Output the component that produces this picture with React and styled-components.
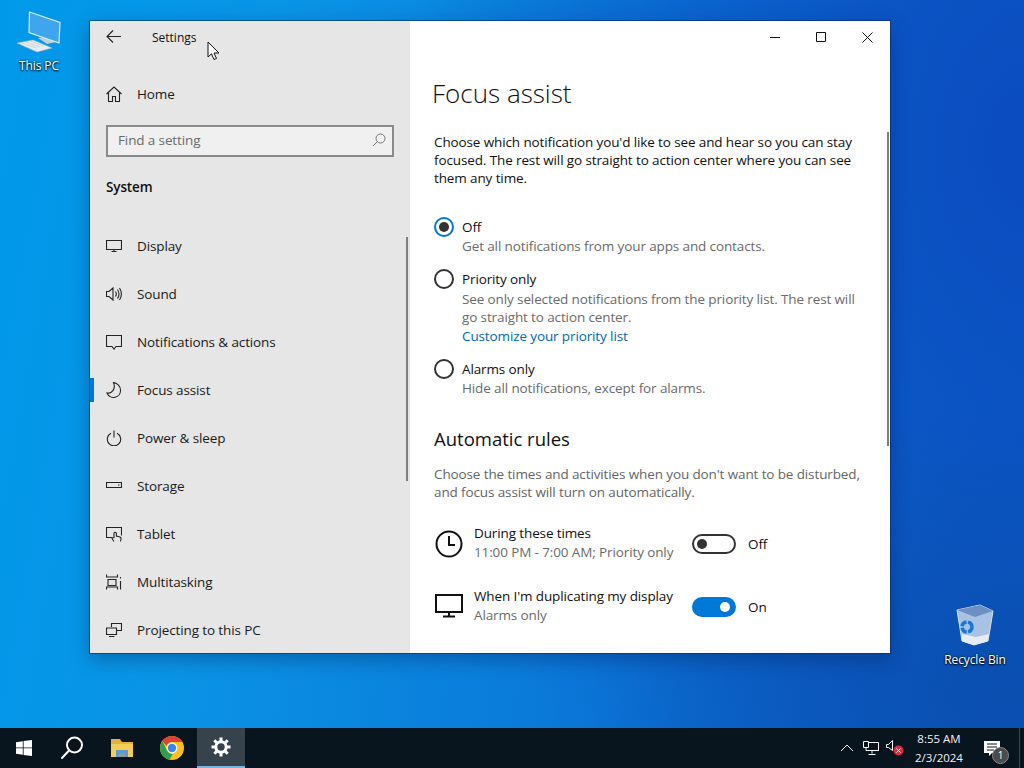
import styled, { createGlobalStyle } from 'styled-components';

const GlobalStyle = createGlobalStyle`
  html, body {
    margin: 0;
    padding: 0;
    overflow: hidden;
  }
  body {
    font-family: "Open Sans", "Noto Sans", "Liberation Sans", sans-serif;
    font-size: 13.5px;
    letter-spacing: -0.12px;
    color: #111;
  }
  * {
    box-sizing: border-box;
  }
`;

const Page = styled.div`
  width: 1024px;
  height: 768px;
  display: grid;
  grid-template-rows: 728px 40px;
`;

const Desktop = styled.div`
  position: relative;
  overflow: hidden;
  background:
    radial-gradient(ellipse 420px 300px at 1010px 700px, #0a4fb0 0%, rgba(10, 79, 176, 0) 100%),
    radial-gradient(ellipse 620px 900px at 100% 20%, #0b4cc0 0%, rgba(11, 76, 192, 0) 100%),
    linear-gradient(100deg, #0099ea 0%, #0a94e6 25%, #0a78d8 60%, #0a5fc8 100%);
`;

const DesktopIcon = styled.div`
  position: absolute;
  left: ${(p) => p.$left}px;
  top: ${(p) => p.$top}px;
  width: 76px;
  display: flex;
  flex-direction: column;
  align-items: center;
  color: #fff;
  font-size: 12px;
  line-height: 16px;
  text-shadow: 0 1px 2px #000, 0 0 2px #000;
  svg {
    margin-bottom: ${(p) => p.$labelGap}px;
  }
`;

const Window = styled.div`
  position: absolute;
  left: 90px;
  top: 21px;
  width: 800px;
  height: 632px;
  display: grid;
  grid-template-columns: 320px 480px;
  box-shadow: 0 0 0 1px rgba(5, 40, 90, 0.55), 0 6px 18px rgba(0, 20, 70, 0.35);
  overflow: hidden;
`;

const Sidebar = styled.aside`
  position: relative;
  background: #e6e6e6;
  overflow: hidden;
`;

const TitleRow = styled.div`
  height: 32px;
  display: flex;
  align-items: center;
  padding-left: 16px;
  font-size: 12px;
  letter-spacing: 0;
  svg {
    display: block;
  }
`;

const TitleText = styled.span`
  margin-left: 30px;
  margin-top: 1px;
`;

const NavRow = styled.div`
  position: relative;
  height: 48px;
  display: flex;
  align-items: center;
  padding-left: 16px;
  gap: 15px;
  color: #1a1a1a;
  svg {
    flex: none;
    display: block;
  }
`;

const HomeRow = styled(NavRow)`
  margin-top: 17px;
`;

const SelectedMark = styled.span`
  position: absolute;
  left: 0;
  top: 12px;
  width: 4px;
  height: 24px;
  background: #0078d7;
`;

const SearchBox = styled.div`
  margin: 7px 0 0 16px;
  width: 288px;
  height: 32px;
  border: 2px solid #8a8a8a;
  background: #f0f0f0;
  display: flex;
  align-items: center;
  justify-content: space-between;
  padding: 0 6px 2px 10px;
  color: #6b6b6b;
`;

const GroupTitle = styled.div`
  margin: 20px 0 0 16px;
  font-weight: 600;
  line-height: 20px;
`;

const NavList = styled.nav`
  margin-top: 25px;
`;

const ScrollThumb = styled.div`
  position: absolute;
  top: ${(p) => p.$top}px;
  right: ${(p) => p.$right}px;
  width: 2px;
  height: ${(p) => p.$height}px;
  background: #7f7f7f;
`;

const Content = styled.main`
  position: relative;
  background: #fff;
  overflow: hidden;
  padding-left: 24px;
`;

const WindowControls = styled.div`
  height: 32px;
  margin-left: -24px;
  display: flex;
  justify-content: flex-end;
`;

const ControlButton = styled.div`
  width: 46px;
  height: 32px;
  display: flex;
  align-items: center;
  justify-content: center;
`;

const PageTitle = styled.h1`
  margin: 20px 0 0 -2px;
  font-size: 26px;
  font-weight: 300;
  letter-spacing: 0;
  line-height: 40px;
  color: #111;
`;

const Paragraph = styled.p`
  margin: ${(p) => p.$top}px 0 0;
  width: 436px;
  line-height: 18px;
  color: ${(p) => p.$muted ? '#666' : '#111'};
`;

const RadioGroup = styled.div`
  margin-top: 30px;
  display: flex;
  flex-direction: column;
  gap: 14px;
`;

const RadioOption = styled.div`
  display: grid;
  grid-template-columns: 28px 1fr;
  line-height: 18px;
`;

const RadioCircle = styled.span`
  width: 20px;
  height: 20px;
  border-radius: 50%;
  border: 2px solid ${(p) => p.$checked ? '#0078d7' : '#333'};
  display: flex;
  align-items: center;
  justify-content: center;
  &::after {
    content: '';
    display: ${(p) => p.$checked ? 'block' : 'none'};
    width: 10px;
    height: 10px;
    border-radius: 50%;
    background: #333;
  }
`;

const RadioLabel = styled.div`
  line-height: 20px;
`;

const Muted = styled.div`
  color: #6b6b6b;
  line-height: 18px;
  width: 410px;
`;

const PriorityDetails = styled.div`
  padding-top: 1px;
`;

const PriorityLink = styled.div`
  color: #0067b8;
  margin-top: 1px;
  line-height: 18px;
`;

const SectionTitle = styled.h2`
  margin: 28px 0 0;
  font-size: 18.5px;
  font-weight: 400;
  letter-spacing: 0;
  line-height: 28px;
`;

const Rules = styled.div`
  margin-top: 22px;
  display: flex;
  flex-direction: column;
  gap: 25px;
`;

const Rule = styled.div`
  display: grid;
  grid-template-columns: 40px 218px 44px auto;
  align-items: center;
  height: 38px;
`;

const RuleIcon = styled.svg`
  margin-top: ${(p) => p.$shift}px;
`;

const RuleTitle = styled.div`
  line-height: 20px;
  white-space: nowrap;
`;

const Toggle = styled.span`
  position: relative;
  width: 44px;
  height: 20px;
  margin-top: 3px;
  border-radius: 10px;
  border: 2px solid ${(p) => p.$on ? '#0078d7' : '#333'};
  background: ${(p) => p.$on ? '#0078d7' : '#fff'};
  &::after {
    content: '';
    position: absolute;
    top: 3px;
    left: ${(p) => p.$on ? '26px' : '3px'};
    width: 10px;
    height: 10px;
    border-radius: 50%;
    background: ${(p) => p.$on ? '#fff' : '#333'};
  }
`;

const ToggleLabel = styled.span`
  margin: 4px 0 0 12px;
`;

const Cursor = styled.svg`
  position: absolute;
  left: 207px;
  top: 41px;
`;

const Taskbar = styled.footer`
  height: 40px;
  background: #08151f;
  display: flex;
  align-items: stretch;
  color: #fff;
`;

const TaskButton = styled.div`
  width: ${(p) => p.$width || 48}px;
  display: flex;
  align-items: center;
  justify-content: center;
  background: ${(p) => p.$active ? '#36434c' : 'transparent'};
  border-bottom: ${(p) => p.$active ? '2px solid #7cb4dc' : 'none'};
  margin-left: ${(p) => p.$gap || 0}px;
`;

const Tray = styled.div`
  margin-left: auto;
  display: flex;
  align-items: center;
`;

const TrayIcon = styled.div`
  width: 24px;
  display: flex;
  justify-content: center;
`;

const Clock = styled.div`
  width: 64px;
  text-align: center;
  font-size: 11.5px;
  letter-spacing: 0;
  line-height: 19px;
  color: #f2f2f2;
`;

const Notification = styled.div`
  position: relative;
  width: 34px;
  margin-left: 4px;
  display: flex;
  justify-content: center;
`;

const Badge = styled.span`
  position: absolute;
  left: 17px;
  top: 6px;
  width: 17px;
  height: 17px;
  border-radius: 50%;
  background: #4b4b4b;
  border: 1px solid #8a8a8a;
  font-size: 10px;
  line-height: 15px;
  text-align: center;
`;

const ShowDesktop = styled.div`
  align-self: stretch;
  width: 5px;
  margin-left: 10px;
  border-left: 1px solid #3d4a54;
`;

const stroke = { fill: 'none', stroke: '#222', strokeWidth: 1.1 };

function Icon({ children, w = 16, h = 16, view }) {
  return (
    <svg width={w} height={h} viewBox={view || `0 0 ${w} ${h}`} {...stroke}>
      {children}
    </svg>
  );
}

const navItems = [
  ['Display', <Icon key="i"><path d="M.5 2.500h15v9H.5zM8 11.500v2M5.500 13.500h5" /></Icon>],
  ['Sound', <Icon key="i"><path d="M.5 5.500h2.500L7 2v12L3 10.500H.5zM9.500 5.500c1 1.500 1 3.500 0 5M11.500 3.500c2 2.500 2 6.500 0 9M13.500 2c2.500 3.500 2.500 8.500 0 12" /></Icon>],
  ['Notifications & actions', <Icon key="i"><path d="M.5 1.500h15v11H10l-2 2.500-2-2.500H.5z" /></Icon>],
  ['Focus assist', <Icon key="i"><path d="M7.500.5c4 .5 7 3.800 7 7.500a7 7 0 0 1-13.500 3c5 1 9-4.500 6.500-10.500z" /></Icon>],
  ['Power & sleep', <Icon key="i"><path d="M8 .5v7M5 3.200a6.700 6.700 0 1 0 6 0" /></Icon>],
  ['Storage', <Icon key="i"><path d="M.5 4.500h15v5H.5zM12 7h1.500" /></Icon>],
  ['Tablet', <Icon key="i"><path d="M6 11.500H.5v-10h15v8M8 15.500c-1.200-1.500-2-2.500-2-3.500l2-.5V7.500a1.200 1.200 0 0 1 2.400 0V10l3.600 1c.8.300 1.200 1 1 2l-.5 2.500" /></Icon>],
  ['Multitasking', <Icon key="i"><path d="M.5.500v2.500h11V.500M2 5.500h8v6H2zM.5 15.500V13h11v2.500M14.500 7v8.500M14.500 3v1.500" /></Icon>],
  ['Projecting to this PC', <Icon key="i"><path d="M5.500 5V1.500h10v7h-5M.5 6h10v6.500H.5zM3 14.500h5.500" /></Icon>],
];

function ThisPcIcon() {
  return (
    <svg width="48" height="44" viewBox="0 0 48 44">
      <path d="M23 28l17-3 1 7-9 2z" fill="#c3cfd8" />
      <path d="M14.500 2L45 12.500 44 33 14 22.500z" fill="#3fa6ee" stroke="#d5ecfa" strokeWidth="1.200" />
      <path d="M2 33l16-3 19 8-15 4z" fill="#e6eef3" stroke="#a5bac8" strokeWidth="0.6" />
      <path d="M7 33l14 5M11 32l14 5M15 31l14 5" stroke="#b5c5d0" strokeWidth="0.6" />
    </svg>
  );
}

function RecycleBinIcon() {
  return (
    <svg width="38" height="42" viewBox="0 0 38 42">
      <path d="M1 6L24 1l13 6-5 30-14 4-12-4z" fill="#a9c2e4" stroke="#d5e3f3" strokeWidth="1" />
      <path d="M1 6L24 1l13 6-18 6z" fill="#6e8fc4" />
      <path d="M6 30l14 3 13-3-1.500 7L18 41 6 37z" fill="#e6ecf2" />
      <circle cx="11" cy="23" r="5" fill="none" stroke="#1678d2" strokeWidth="3.500" strokeDasharray="6.500 1.500" />
    </svg>
  );
}

function WindowsLogo() {
  return (
    <svg width="16" height="16" viewBox="0 0 16 16" fill="#fff">
      <path d="M0 2.200L6.800 1.200V7.500H0zM7.600 1.100L16 0V7.500H7.600zM0 8.300H6.800V14.700L0 13.800zM7.600 8.300H16V16L7.600 14.900z" />
    </svg>
  );
}

function SearchIcon() {
  return (
    <svg width="24" height="24" viewBox="0 0 24 24" fill="none" stroke="#fff" strokeWidth="2">
      <circle cx="14.500" cy="9" r="7.500" />
      <path d="M9 14.500L2 22" strokeLinecap="round" />
    </svg>
  );
}

function FolderIcon() {
  return (
    <svg width="22" height="18" viewBox="0 0 22 18">
      <path d="M0 0h9l2 3h11v15H0z" fill="#e2b23e" />
      <path d="M0 5h22v13H0z" fill="#f5cd55" />
      <path d="M5 11h12v7h-3v-4H8v4H5z" fill="#5b9bd0" />
      <path d="M8 14h6v4H8z" fill="#8d9aa0" />
    </svg>
  );
}

function ChromeIcon() {
  return (
    <svg width="24" height="24" viewBox="0 0 24 24">
      <circle cx="12" cy="12" r="12" fill="#fbc116" />
      <path d="M12 0a12 12 0 0 1 10.400 6H12a6 6 0 0 0-5.600 3.800L2.200 5.100A12 12 0 0 1 12 0z" fill="#db4437" />
      <path d="M2.200 5.100l4.900 9.700a6 6 0 0 0 5.700 3.100L9.400 23.700A12 12 0 0 1 2.200 5.100z" fill="#2f9e4f" />
      <circle cx="12" cy="12" r="5.400" fill="#fff" />
      <circle cx="12" cy="12" r="4.200" fill="#3f85e6" />
    </svg>
  );
}

function GearIcon() {
  return (
    <svg width="20" height="20" viewBox="0 0 20 20" fill="none" stroke="#fff">
      <circle cx="10" cy="10" r="5.200" strokeWidth="3" />
      <path d="M10 0.500v3.500M10 16v3.500M.5 10H4M16 10h3.500M3.300 3.300l2.500 2.500M14.200 14.200l2.500 2.500M3.300 16.700l2.500-2.500M14.200 5.800l2.500-2.500" strokeWidth="3" />
    </svg>
  );
}

export default function App() {
  return (
    <Page>
      <GlobalStyle />
      <Desktop>
        <DesktopIcon $left={1} $top={10} $labelGap={4}>
          <ThisPcIcon />
          <span>This PC</span>
        </DesktopIcon>
        <DesktopIcon $left={937} $top={604} $labelGap={6}>
          <RecycleBinIcon />
          <span>Recycle Bin</span>
        </DesktopIcon>

        <Window>
          <Sidebar>
            <TitleRow>
              <Icon>
                <path d="M1 7.500h14M7 1.500l-6 6 6 6" />
              </Icon>
              <TitleText>Settings</TitleText>
            </TitleRow>
            <HomeRow>
              <Icon>
                <path d="M.5 8L8 1l7.500 7M2.500 6.500v9h4v-5h3v5h4v-9" />
              </Icon>
              <span>Home</span>
            </HomeRow>
            <SearchBox>
              <span>Find a setting</span>
              <svg width="14" height="14" viewBox="0 0 14 14" fill="none" stroke="#777">
                <circle cx="8.500" cy="5.500" r="4.500" />
                <path d="M5.500 8.500L1 13" />
              </svg>
            </SearchBox>
            <GroupTitle>System</GroupTitle>
            <NavList>
              {navItems.map(([label, icon]) => (
                <NavRow key={label}>
                  {label === 'Focus assist' && <SelectedMark />}
                  {icon}
                  <span>{label}</span>
                </NavRow>
              ))}
            </NavList>
            <ScrollThumb $top={216} $right={2} $height={244} />
          </Sidebar>

          <Content>
            <WindowControls>
              <ControlButton>
                <svg width="10" height="10" viewBox="0 0 10 10" stroke="#111"><path d="M0 5.500h10" /></svg>
              </ControlButton>
              <ControlButton>
                <svg width="10" height="10" viewBox="0 0 10 10" fill="none" stroke="#111"><path d="M.5.500h9v9h-9z" /></svg>
              </ControlButton>
              <ControlButton>
                <svg width="11" height="11" viewBox="0 0 11 11" fill="none" stroke="#111"><path d="M.5.500l10 10M10.500.500l-10 10" /></svg>
              </ControlButton>
            </WindowControls>
            <PageTitle>Focus assist</PageTitle>
            <Paragraph $top={20}>
              Choose which notification you'd like to see and hear so you can stay focused. The rest will go straight to action center where you can see them any time.
            </Paragraph>

            <RadioGroup>
              <RadioOption>
                <RadioCircle $checked />
                <RadioLabel>Off</RadioLabel>
                <span />
                <Muted>Get all notifications from your apps and contacts.</Muted>
              </RadioOption>
              <RadioOption>
                <RadioCircle />
                <RadioLabel>Priority only</RadioLabel>
                <span />
                <PriorityDetails>
                  <Muted>See only selected notifications from the priority list. The rest will go straight to action center.</Muted>
                  <PriorityLink>Customize your priority list</PriorityLink>
                </PriorityDetails>
              </RadioOption>
              <RadioOption>
                <RadioCircle />
                <RadioLabel>Alarms only</RadioLabel>
                <span />
                <Muted>Hide all notifications, except for alarms.</Muted>
              </RadioOption>
            </RadioGroup>

            <SectionTitle>Automatic rules</SectionTitle>
            <Paragraph $top={12} $muted>
              Choose the times and activities when you don't want to be disturbed, and focus assist will turn on automatically.
            </Paragraph>

            <Rules>
              <Rule>
                <RuleIcon $shift={3} width="30" height="30" viewBox="0 0 30 30" fill="none" stroke="#111" strokeWidth="2">
                  <circle cx="15" cy="15" r="12.500" />
                  <path d="M15 7v9h6" />
                </RuleIcon>
                <div>
                  <RuleTitle>During these times</RuleTitle>
                  <Muted>11:00 PM - 7:00 AM; Priority only</Muted>
                </div>
                <Toggle />
                <ToggleLabel>Off</ToggleLabel>
              </Rule>
              <Rule>
                <RuleIcon $shift={0} width="30" height="26" viewBox="0 0 30 26" fill="none" stroke="#111" strokeWidth="2">
                  <path d="M2 3h26v17H2zM15 20v4M9 24.500h12" />
                </RuleIcon>
                <div>
                  <RuleTitle>When I'm duplicating my display</RuleTitle>
                  <Muted>Alarms only</Muted>
                </div>
                <Toggle $on />
                <ToggleLabel>On</ToggleLabel>
              </Rule>
            </Rules>
            <ScrollThumb $top={111} $right={1} $height={314} />
          </Content>
        </Window>

        <Cursor width="14" height="20" viewBox="0 0 14 20">
          <path d="M1 1v15l3.500-3.200 2.500 5.700 2.500-1-2.500-5.500H12z" fill="#fff" stroke="#111" strokeWidth="1" />
        </Cursor>
      </Desktop>

      <Taskbar>
        <TaskButton><WindowsLogo /></TaskButton>
        <TaskButton><SearchIcon /></TaskButton>
        <TaskButton $gap={2}><FolderIcon /></TaskButton>
        <TaskButton $gap={2}><ChromeIcon /></TaskButton>
        <TaskButton $gap={1} $active><GearIcon /></TaskButton>
        <Tray>
          <TrayIcon>
            <svg width="14" height="8" viewBox="0 0 14 8" fill="none" stroke="#fff"><path d="M1 7l6-6 6 6" /></svg>
          </TrayIcon>
          <TrayIcon>
            <svg width="16" height="14" viewBox="0 0 16 14" fill="none" stroke="#fff"><path d="M3 1.500h12.500v8H3zM9 9.500v3M5.500 13.500h7" /><path d="M.5 .5h5v6h-5z" fill="#08151f" /></svg>
          </TrayIcon>
          <TrayIcon>
            <svg width="18" height="16" viewBox="0 0 18 16">
              <path d="M.5 4.500h2l4-4v10l-4-3h-2z" fill="none" stroke="#fff" />
              <circle cx="12.500" cy="10.500" r="5" fill="#d9303e" />
              <path d="M10.500 8.500l4 4M14.500 8.500l-4 4" stroke="#fff" />
            </svg>
          </TrayIcon>
          <Clock>8:55 AM<br />2/3/2024</Clock>
          <Notification>
            <svg width="16" height="15" viewBox="0 0 16 15">
              <path d="M0 0h16v12H8l-3 3v-3H0z" fill="#fff" />
              <path d="M3 3h10M3 6h10M3 9h7" stroke="#08151f" />
            </svg>
            <Badge>1</Badge>
          </Notification>
          <ShowDesktop />
        </Tray>
      </Taskbar>
    </Page>
  );
}
